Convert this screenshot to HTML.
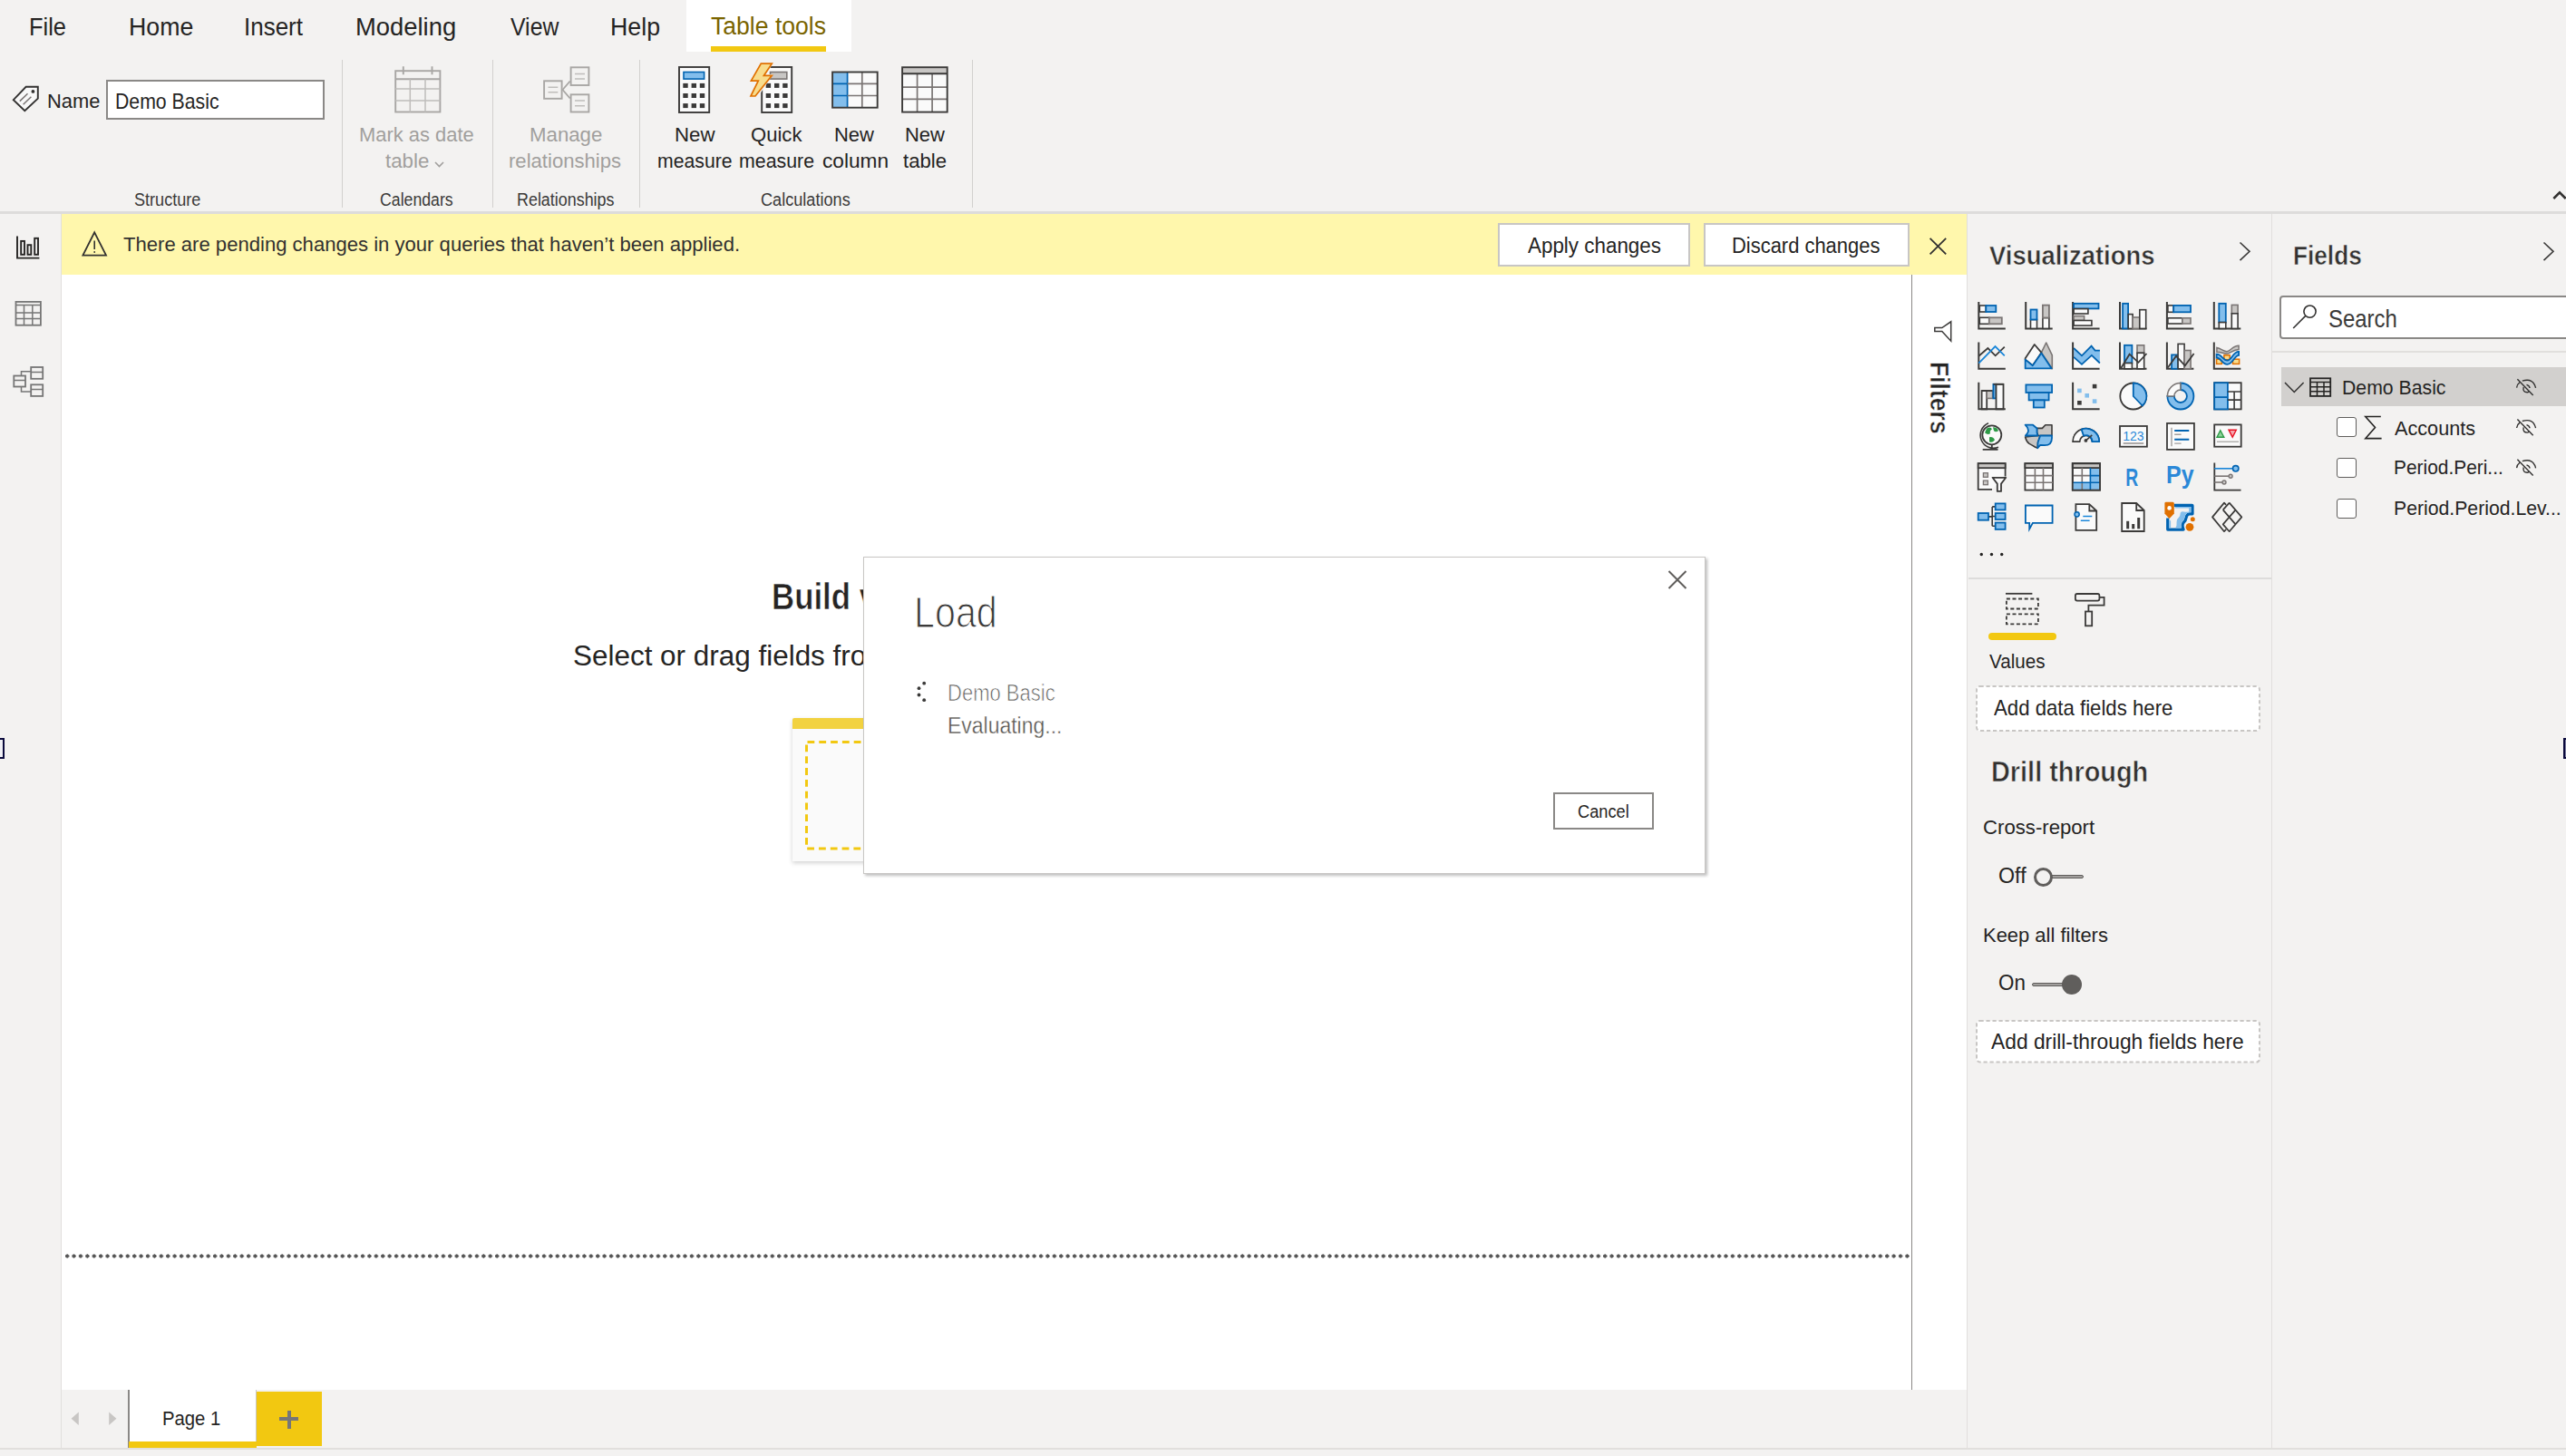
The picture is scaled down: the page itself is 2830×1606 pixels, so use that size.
<!DOCTYPE html>
<html><head><meta charset="utf-8">
<style>
*{box-sizing:border-box;margin:0;padding:0}
html,body{width:2830px;height:1606px;overflow:hidden;background:#F3F2F1;font-family:"Liberation Sans",sans-serif;color:#252423}
.a{position:absolute}
.t{position:absolute;white-space:nowrap;line-height:1;transform-origin:0 0}
svg{position:absolute;overflow:visible}
.ic{fill:none;stroke:#3B3A39;stroke-width:2}
</style></head><body>
<!-- tab row -->
<div class="a" style="left:757px;top:0;width:182px;height:57px;background:#fff"></div>
<div class="a" style="left:784px;top:51px;width:127px;height:6px;background:#F2C811"></div>
<!-- ribbon bottom border -->
<div class="a" style="left:0;top:233px;width:2830px;height:3px;background:#DDDCDB"></div>
<!-- ribbon separators -->
<div class="a" style="left:377px;top:66px;width:1px;height:163px;background:#D2D0CE"></div>
<div class="a" style="left:543px;top:66px;width:1px;height:163px;background:#D2D0CE"></div>
<div class="a" style="left:705px;top:66px;width:1px;height:163px;background:#D2D0CE"></div>
<div class="a" style="left:1072px;top:66px;width:1px;height:163px;background:#D2D0CE"></div>
<!-- name textbox -->
<div class="a" style="left:117px;top:88px;width:241px;height:44px;background:#fff;border:2px solid #8A8886"></div>
<!-- left sidebar border -->
<div class="a" style="left:67px;top:236px;width:1px;height:1362px;background:#E1DFDD"></div>
<!-- banner -->
<div class="a" style="left:68px;top:236px;width:2101px;height:67px;background:#FFF7AC"></div>
<div class="a" style="left:1652px;top:246px;width:212px;height:48px;background:#fff;border:2px solid #C8C6C4"></div>
<div class="a" style="left:1879px;top:246px;width:227px;height:48px;background:#fff;border:2px solid #C8C6C4"></div>
<!-- canvas -->
<div class="a" style="left:68px;top:303px;width:2101px;height:1230px;background:#fff"></div>
<div class="a" style="left:2108px;top:303px;width:1px;height:1230px;background:#8A8886"></div>
<!-- dotted line -->
<div class="a" style="left:72px;top:1383px;width:2036px;height:5px;background-image:radial-gradient(circle at 2.2px 2.5px,#555 1.9px,transparent 2.3px);background-size:7.42px 5px;background-repeat:repeat-x"></div>
<!-- placeholder card -->
<div class="a" style="left:874px;top:792px;width:200px;height:158px;background:#FAFAFA;border-radius:2px 2px 0 0;box-shadow:0 2px 5px rgba(0,0,0,0.18)"></div>
<div class="a" style="left:874px;top:792px;width:200px;height:12px;background:#F2D240;border-radius:2px 2px 0 0"></div>
<svg style="left:0;top:0" width="2830" height="1606"><rect x="889.5" y="818.5" width="170" height="117.5" fill="none" stroke="#F2C811" stroke-width="3" stroke-dasharray="7.8,5" stroke-dashoffset="-1"/></svg>
<!-- viz pane border -->
<div class="a" style="left:2169px;top:236px;width:1px;height:1362px;background:#E1DFDD"></div>
<div class="a" style="left:2505px;top:236px;width:1px;height:1362px;background:#E1DFDD"></div>
<!-- viz separator -->
<div class="a" style="left:2171px;top:637px;width:334px;height:1.5px;background:#DDDCDB"></div>
<!-- fields tab underline -->
<div class="a" style="left:2193px;top:698px;width:75px;height:8px;background:#F2C811;border-radius:4px"></div>
<!-- dashed wells -->
<svg style="left:0;top:0" width="2830" height="1606">
<rect x="2180" y="757" width="312" height="49" rx="3.5" fill="#fff" stroke="#C8C6C4" stroke-width="2" stroke-dasharray="4.2,2.8"/>
<rect x="2180" y="1126" width="312" height="45.5" rx="3.5" fill="#fff" stroke="#C8C6C4" stroke-width="2" stroke-dasharray="4.2,2.8"/>
</svg>

<!-- toggles -->
<div class="a" style="left:2260px;top:965px;width:38px;height:4px;background:#A19F9D;border:1px solid #605E5C;border-radius:2px"></div>
<div class="a" style="left:2243px;top:957px;width:21px;height:21px;background:#F3F2F1;border:3px solid #605E5C;border-radius:50%"></div>
<div class="a" style="left:2241px;top:1084px;width:40px;height:4px;background:#A19F9D;border:1px solid #605E5C;border-radius:2px"></div>
<div class="a" style="left:2274px;top:1075px;width:22px;height:22px;background:#605E5C;border-radius:50%"></div>
<!-- fields pane -->
<div class="a" style="left:2514px;top:326px;width:330px;height:48px;background:#fff;border:2px solid #8A8886;border-radius:4px"></div>
<div class="a" style="left:2506px;top:387px;width:324px;height:2px;background:#E1DFDD"></div>
<div class="a" style="left:2516px;top:405px;width:314px;height:43px;background:#D2D0CE"></div>
<div class="a" style="left:2577px;top:460px;width:22px;height:22px;background:#fff;border:1.5px solid #605E5C;border-radius:3px"></div>
<div class="a" style="left:2577px;top:505px;width:22px;height:22px;background:#fff;border:1.5px solid #605E5C;border-radius:3px"></div>
<div class="a" style="left:2577px;top:550px;width:22px;height:22px;background:#fff;border:1.5px solid #605E5C;border-radius:3px"></div>
<!-- page tabs -->
<div class="a" style="left:141px;top:1533px;width:142px;height:65px;background:#fff;border-left:2px solid #8A8886;border-right:1px solid #C8C6C4"></div>
<div class="a" style="left:142px;top:1590px;width:141px;height:7.5px;background:#F2C811"></div>
<div class="a" style="left:0;top:1597px;width:2830px;height:2px;background:#E1DFDD"></div>
<div class="a" style="left:283px;top:1535px;width:72px;height:60px;background:#F2C811"></div>
<div class="a" style="left:308px;top:1563px;width:21px;height:4px;background:#767676"></div>
<div class="a" style="left:316.5px;top:1556px;width:4px;height:20px;background:#767676"></div>
<svg style="left:0;top:0" width="2830" height="1606">
 <path d="M86.8,1557.4 L78.6,1564.7 L86.8,1572 Z" fill="#C8C6C4"/>
 <path d="M120.2,1557.4 L128.4,1564.7 L120.2,1572 Z" fill="#C8C6C4"/>
</svg>
<!-- edge markers -->
<div class="a" style="left:-3px;top:814px;width:8px;height:23px;background:#F0F0F5;border:2.5px solid #0A0A3C"></div>
<div class="a" style="left:2827px;top:814px;width:8px;height:23px;background:#8080A0;border:2.5px solid #0A0A3C"></div>
<svg style="left:0;top:0" width="2830" height="1606">
<!-- tag icon -->
<path d="M28.6,95.8 L41.8,95.8 L41.8,108.6 L27.3,122.3 L14.8,110.2 Z" fill="#F8F8F8" stroke="#323130" stroke-width="1.9" stroke-linejoin="miter"/>
<circle cx="36.4" cy="100.9" r="1.9" fill="#323130"/>
<path d="M21.8,111.6 L30.5,103.2 M25.6,115.2 L34.4,106.7" stroke="#7A7574" stroke-width="1.5"/>
<!-- calendar -->
<g stroke="#A8A6A4" fill="none">
<rect x="436.2" y="78.2" width="49.2" height="45.3" stroke-width="1.9" fill="#F3F2F1"/>
<path d="M436.2,87.2 H485.4" stroke-width="1.9"/>
<path d="M436.2,97.9 H485.4 M436.2,111 H485.4 M452.3,87.2 V123.5 M469,87.2 V123.5" stroke="#BFBDBB" stroke-width="1.5"/>
<path d="M444.8,73.2 V82.3 M476.5,73.2 V82.3" stroke-width="1.9"/>
</g>
<!-- relationships -->
<g stroke="#A8A6A4" fill="#F3F2F1" stroke-width="1.9">
<rect x="600.1" y="89.3" width="19.5" height="19.5"/>
<rect x="629.6" y="74.3" width="19.8" height="19.7"/>
<rect x="629.6" y="104.3" width="19.8" height="19.2"/>
<path d="M620.5,99 L628.7,89.5 M620.5,99 L628.7,108.5" fill="none"/>
<path d="M604.5,96.3 H615.3 M604.5,101.8 H615.3 M634,81.5 H645 M634,87 H645 M634,111 H645 M634,116.8 H645" stroke="#BFBDBB" stroke-width="1.5" fill="none"/>
</g>
<!-- new measure calculator -->
<rect x="749" y="74" width="33.2" height="50" fill="#FAFAFA" stroke="#3B3A39" stroke-width="1.9"/>
<rect x="754" y="79.5" width="22.6" height="7.6" fill="#83BEEC" stroke="#0063B1" stroke-width="1.6"/>
<g fill="#3B3A39">
<rect x="753.3" y="91.9" width="5.4" height="5"/><rect x="762.6" y="91.9" width="5.4" height="5"/><rect x="771.8" y="91.9" width="5.4" height="5"/>
<rect x="753.3" y="103" width="5.4" height="5"/><rect x="762.6" y="103" width="5.4" height="5"/><rect x="771.8" y="103" width="5.4" height="5"/>
<rect x="753.3" y="114.1" width="5.4" height="5"/><rect x="762.6" y="114.1" width="5.4" height="5"/><rect x="771.8" y="114.1" width="5.4" height="5"/>
</g>
<!-- quick measure -->
<rect x="840.2" y="74" width="33" height="50" fill="#FAFAFA" stroke="#3B3A39" stroke-width="1.9"/>
<rect x="849.5" y="79.5" width="18.3" height="7.6" fill="#C8C6C4" stroke="#7A7574" stroke-width="1.6"/>
<g fill="#3B3A39">
<rect x="844.7" y="91.9" width="5.4" height="5"/><rect x="854" y="91.9" width="5.4" height="5"/><rect x="863.2" y="91.9" width="5.4" height="5"/>
<rect x="844.7" y="103" width="5.4" height="5"/><rect x="854" y="103" width="5.4" height="5"/><rect x="863.2" y="103" width="5.4" height="5"/>
<rect x="844.7" y="114.1" width="5.4" height="5"/><rect x="854" y="114.1" width="5.4" height="5"/><rect x="863.2" y="114.1" width="5.4" height="5"/>
</g>
<path d="M838.4,68 L853.6,68 L845.2,82 L852.6,82 L835.2,108 L825.6,108 L833.8,91.2 L826,91.2 Z" fill="#F3F2F1"/>
<path d="M839.3,70.2 L851.3,70.2 L842.4,83.4 L851.3,83.4 L833,106 L828,106 L836.3,89.2 L828.4,89.2 Z" fill="#F8DC8C" stroke="#E07000" stroke-width="1.7" stroke-linejoin="miter"/>
<!-- new column -->
<rect x="918.1" y="79.5" width="49.6" height="39.2" fill="#FAFAFA"/>
<rect x="918.1" y="79.5" width="16.5" height="39.2" fill="#83BEEC"/>
<path d="M934.6,79.5 V118.7 M918.1,92.4 H934.6 M918.1,105.5 H934.6" stroke="#0063B1" stroke-width="1.7"/>
<path d="M950.8,79.5 V118.7 M934.6,92.4 H967.7 M934.6,105.5 H967.7" stroke="#7A7574" stroke-width="1.7"/>
<rect x="918.1" y="79.5" width="49.6" height="39.2" fill="none" stroke="#3B3A39" stroke-width="1.9"/>
<!-- new table -->
<rect x="995.1" y="74.2" width="49.6" height="49.4" fill="#FAFAFA"/>
<rect x="995.1" y="74.2" width="49.6" height="7.1" fill="#C8C6C4"/>
<path d="M995.1,96.2 H1044.7 M995.1,109.3 H1044.7 M1011.6,81.3 V123.6 M1028.1,81.3 V123.6" stroke="#7A7574" stroke-width="1.7"/>
<path d="M995.1,81.3 H1044.7" stroke="#3B3A39" stroke-width="1.9"/>
<rect x="995.1" y="74.2" width="49.6" height="49.4" fill="none" stroke="#3B3A39" stroke-width="1.9"/>
<!-- table chevron -->
<path d="M480,179 L484.5,183.5 L489,179" fill="none" stroke="#A19F9D" stroke-width="1.6"/>
<!-- collapse caret -->
<path d="M2816.3,219 L2823,212.3 L2829.7,219" fill="none" stroke="#323130" stroke-width="2.5"/>
<!-- sidebar report icon -->
<g fill="none" stroke="#252423" stroke-width="1.9">
<path d="M19,260.5 V284.6 H43.4"/>
<rect x="23.2" y="265.9" width="3.8" height="14.9"/>
<rect x="30.5" y="270.2" width="3.8" height="10.6"/>
<rect x="38.2" y="262.8" width="3.8" height="18"/>
</g>
<!-- sidebar table icon -->
<g fill="none" stroke="#767676" stroke-width="1.8">
<rect x="17.5" y="332.9" width="27.4" height="25.8"/>
<path d="M17.5,336.5 H44.9 M17.5,345 H44.9 M17.5,351.5 H44.9 M26.5,336.5 V358.7 M35.8,336.5 V358.7" stroke-width="1.5"/>
</g>
<!-- sidebar model icon -->
<g fill="none" stroke="#767676" stroke-width="1.8">
<rect x="15.3" y="414.5" width="12.7" height="12"/>
<rect x="34.2" y="405" width="13" height="12.8"/>
<rect x="34.2" y="424.3" width="13" height="12.6"/>
<path d="M15.3,419.6 H28 M34.2,410.5 H47.2 M34.2,429.5 H47.2 M23.5,414.5 V409.8 H34.2 M23.5,426.5 V432 H34.2" stroke-width="1.5"/>
</g>
<!-- warning triangle -->
<path d="M104.2,256.3 L117,281.6 L91.4,281.6 Z" fill="none" stroke="#323130" stroke-width="1.8" stroke-linejoin="miter"/>
<path d="M104.2,265.5 V275" stroke="#323130" stroke-width="1.6"/>
<circle cx="104.2" cy="278" r="0.9" fill="#323130"/>
<!-- banner close -->
<path d="M2128.6,262.8 L2146.2,280.4 M2146.2,262.8 L2128.6,280.4" stroke="#323130" stroke-width="1.8"/>
<!-- filters funnel (rotated, pointing left) -->
<path d="M2151.7,354.8 L2151.7,376.2 L2141.8,365.6 L2133.8,365.6 L2133.8,361.6 L2141.8,361.6 Z" fill="none" stroke="#3B3A39" stroke-width="1.5" stroke-linejoin="miter"/>
<path d="M2151.7,354.8 L2141.8,363.4" fill="none" stroke="#3B3A39" stroke-width="0"/>
<!-- pane chevrons -->
<path d="M2470.5,267.5 L2481,277.3 L2470.5,287.2" fill="none" stroke="#3B3A39" stroke-width="1.6"/>
<path d="M2805.5,267.5 L2816,277.3 L2805.5,287.2" fill="none" stroke="#3B3A39" stroke-width="1.6"/>
<!-- search magnifier -->
<circle cx="2547.5" cy="343.6" r="6.6" fill="none" stroke="#323130" stroke-width="1.6"/>
<path d="M2542.8,348.4 L2529.2,362" stroke="#323130" stroke-width="1.6"/>
<!-- fields: chevron down -->
<path d="M2520,422 L2530.3,432.5 L2540.6,422" fill="none" stroke="#323130" stroke-width="1.5"/>
<!-- fields table icon -->
<g fill="none" stroke="#252423">
<rect x="2548" y="417.3" width="22.2" height="19.6" stroke-width="1.8"/>
<path d="M2548,421.5 H2570.2 M2548,426.8 H2570.2 M2548,431.8 H2570.2 M2555.5,421.5 V436.9 M2563,421.5 V436.9" stroke-width="1.5"/>
</g>
<!-- sigma -->
<path d="M2625.8,459.5 H2608.8 L2619.5,471.5 L2608.8,483.6 H2626.6" fill="none" stroke="#252423" stroke-width="1.6"/>
</svg>
<svg style="left:0;top:0" width="2830" height="1606">
<g transform="translate(2181.0,332.0)"><path d="M1.3,1 V30.4 H30.8" fill="none" stroke="#3B3A39" stroke-width="2"/>
<rect x="2.3" y="5" width="7" height="7" fill="#FAFAFA" stroke="#3B3A39" stroke-width="1.6"/>
<rect x="9.3" y="5" width="11" height="7" fill="#83BEEC" stroke="#0063B1" stroke-width="1.8"/>
<rect x="2.3" y="18.3" width="10.5" height="7" fill="#FAFAFA" stroke="#3B3A39" stroke-width="1.6"/>
<rect x="12.8" y="18.3" width="14" height="7" fill="#C8C6C4" stroke="#7A7574" stroke-width="1.8"/></g>
<g transform="translate(2232.9,332.0)"><path d="M1.3,1 V30.4 H30.8" fill="none" stroke="#3B3A39" stroke-width="2"/>
<rect x="6.6" y="20.5" width="7" height="9.9" fill="#FAFAFA" stroke="#3B3A39" stroke-width="1.6"/>
<rect x="6.6" y="9.5" width="7" height="11" fill="#83BEEC" stroke="#0063B1" stroke-width="1.8"/>
<rect x="20" y="18.5" width="7" height="11.9" fill="#FAFAFA" stroke="#3B3A39" stroke-width="1.6"/>
<rect x="20" y="4.6" width="7" height="13.9" fill="#C8C6C4" stroke="#7A7574" stroke-width="1.8"/></g>
<g transform="translate(2284.8,332.0)"><path d="M1.3,1 V30.4 H30.8" fill="none" stroke="#3B3A39" stroke-width="2"/>
<rect x="2.3" y="2.8" width="27.4" height="5.6" fill="#83BEEC" stroke="#0063B1" stroke-width="1.8"/>
<rect x="2.3" y="8.6" width="15.8" height="5.4" fill="#FAFAFA" stroke="#3B3A39" stroke-width="1.6"/>
<rect x="2.3" y="16.6" width="11.5" height="4.8" fill="#C8C6C4" stroke="#7A7574" stroke-width="1.6"/>
<rect x="2.3" y="21.5" width="19.8" height="5.6" fill="#FAFAFA" stroke="#3B3A39" stroke-width="1.6"/></g>
<g transform="translate(2336.7,332.0)"><path d="M1.3,1 V30.4 H30.8" fill="none" stroke="#3B3A39" stroke-width="2"/>
<rect x="4.4" y="2.8" width="6" height="27.6" fill="#83BEEC" stroke="#0063B1" stroke-width="1.8"/>
<rect x="10.5" y="14.6" width="4.9" height="15.8" fill="#FAFAFA" stroke="#3B3A39" stroke-width="1.6"/>
<rect x="15.4" y="18" width="7.6" height="12.4" fill="#C8C6C4" stroke="#7A7574" stroke-width="1.6"/>
<rect x="23.1" y="9.7" width="6.9" height="20.7" fill="#FAFAFA" stroke="#3B3A39" stroke-width="1.6"/></g>
<g transform="translate(2388.6,332.0)"><path d="M1.3,1 V30.4 H30.8" fill="none" stroke="#3B3A39" stroke-width="2"/>
<rect x="2.3" y="4.9" width="6.3" height="7.4" fill="#FAFAFA" stroke="#3B3A39" stroke-width="1.6"/>
<rect x="8.6" y="4.9" width="18.8" height="7.4" fill="#83BEEC" stroke="#0063B1" stroke-width="1.8"/>
<rect x="2.3" y="18.8" width="16" height="6.2" fill="#FAFAFA" stroke="#3B3A39" stroke-width="1.6"/>
<rect x="18.3" y="18.8" width="9.1" height="6.2" fill="#C8C6C4" stroke="#7A7574" stroke-width="1.6"/></g>
<g transform="translate(2440.5,332.0)"><path d="M1.3,1 V30.4 H30.8" fill="none" stroke="#3B3A39" stroke-width="2"/>
<rect x="6.8" y="2.8" width="7.5" height="20.8" fill="#83BEEC" stroke="#0063B1" stroke-width="1.8"/>
<rect x="6.8" y="23.6" width="7.5" height="6.8" fill="#FAFAFA" stroke="#3B3A39" stroke-width="1.6"/>
<rect x="20.8" y="4.4" width="6.8" height="9.4" fill="#C8C6C4" stroke="#7A7574" stroke-width="1.6"/>
<rect x="20.8" y="13.8" width="6.8" height="16.6" fill="#FAFAFA" stroke="#3B3A39" stroke-width="1.6"/></g>
<g transform="translate(2181.0,376.4)"><path d="M1.3,1 V30.4 H30.8" fill="none" stroke="#3B3A39" stroke-width="2"/>
<path d="M1.3,16.3 L11.4,7.6 L19.7,15.9 L29.8,6.3" fill="none" stroke="#3B3A39" stroke-width="1.8"/>
<path d="M1.3,24.2 L19.5,5.7 L29.8,15.9" fill="none" stroke="#1A86D9" stroke-width="1.8"/></g>
<g transform="translate(2232.9,376.4)">
<path d="M18.5,12.5 L23.8,1.6 L30.4,15.5 L30.4,30.4 Z" fill="#C8C6C4" stroke="#7A7574" stroke-width="1.6" stroke-linejoin="round"/>
<path d="M0.75,18.8 L10.9,3.6 L18.5,12.5 L8.9,26.8 L0.75,20.2 Z" fill="#FAFAFA" stroke="#3B3A39" stroke-width="1.8" stroke-linejoin="round"/>
<path d="M0.75,20.2 L8.9,26.8 L18.5,13.2 L29.8,30 L0.75,30 Z" fill="#83BEEC" stroke="#0063B1" stroke-width="1.8" stroke-linejoin="round"/></g>
<g transform="translate(2284.8,376.4)">
<path d="M2.3,17.5 L11.2,25.5 L22.1,15.5 L31.1,24.1 L31.1,30.4 L1.3,30.4 Z" fill="#FAFAFA"/>
<path d="M2.3,7.6 L11.2,15.9 L21.8,5.3 L25.8,10.2 L31.1,10.2 L31.1,24.1 L22.1,15.5 L11.2,25.5 L2.3,17.5 Z" fill="#83BEEC"/>
<path d="M2.3,7.6 L11.2,15.9 L21.8,5.3 L25.8,10.2 L31.1,10.2 M2.3,17.5 L11.2,25.5 L22.1,15.5 L31.1,24.1" fill="none" stroke="#0063B1" stroke-width="1.8"/><path d="M1.3,1 V30.4 H30.8" fill="none" stroke="#3B3A39" stroke-width="2"/></g>
<g transform="translate(2336.7,376.4)"><path d="M1.3,1 V30.4 H30.8" fill="none" stroke="#3B3A39" stroke-width="2"/>
<rect x="6.3" y="4.4" width="8.4" height="19.7" fill="#83BEEC" stroke="#0063B1" stroke-width="1.8"/>
<rect x="6.3" y="24.1" width="8.4" height="6.3" fill="#FAFAFA" stroke="#3B3A39" stroke-width="1.6"/>
<rect x="20.3" y="4.4" width="7.7" height="8.5" fill="#C8C6C4" stroke="#7A7574" stroke-width="1.6"/>
<rect x="20.3" y="12.9" width="7.7" height="17.5" fill="#FAFAFA" stroke="#3B3A39" stroke-width="1.6"/>
<path d="M2.1,30.4 L11.9,14.3 L21.7,23.4 L30.8,13.6" fill="none" stroke="#3B3A39" stroke-width="1.8"/></g>
<g transform="translate(2388.6,376.4)"><path d="M1.3,1 V30.4 H30.8" fill="none" stroke="#3B3A39" stroke-width="2"/>
<rect x="6.5" y="15" width="7" height="15.4" fill="#83BEEC" stroke="#0063B1" stroke-width="1.8"/>
<rect x="13.5" y="3" width="7" height="27.4" fill="#FAFAFA" stroke="#3B3A39" stroke-width="1.6"/>
<rect x="20.5" y="10.1" width="7" height="20.3" fill="#C8C6C4" stroke="#7A7574" stroke-width="1.6"/>
<path d="M2.3,29 L11.4,16.3 L21.2,26.9 L31,13.6" fill="none" stroke="#3B3A39" stroke-width="1.8"/></g>
<g transform="translate(2440.5,376.4)"><path d="M1.3,1 V30.4 H30.8" fill="none" stroke="#3B3A39" stroke-width="2"/>
<rect x="4.1" y="19.8" width="5.8" height="5.2" fill="#F8DC8C" stroke="#E07000" stroke-width="1.5"/>
<rect x="12.4" y="15.4" width="6.3" height="4.9" fill="#F8DC8C" stroke="#E07000" stroke-width="1.5"/>
<rect x="22" y="19.8" width="7.1" height="5.2" fill="#F8DC8C" stroke="#E07000" stroke-width="1.5"/>
<path d="M4.4,7.1 C9,8 12,11.3 15.4,11.3 C19,11.3 22,4.9 28.6,4.9 L28.6,9.1 C22,9.1 19,13.7 15.4,13.7 C12,13.7 9,11.8 4.4,11.8 Z" fill="#C8C6C4" stroke="#7A7574" stroke-width="1.5"/>
<path d="M4.1,14.3 C10,14.3 11,21.2 15.9,21.2 C21,21.2 22,11.5 28.6,11.5 L28.6,15.4 C24,15.4 22,25.5 15.9,25.5 C10,25.5 9,18.1 4.1,18.1 Z" fill="#83BEEC" stroke="#0063B1" stroke-width="1.8"/></g>
<g transform="translate(2181.0,420.8)">
<rect x="4.6" y="10.2" width="5.6" height="20.4" fill="#FAFAFA" stroke="#3B3A39" stroke-width="1.8"/>
<rect x="10.2" y="10.2" width="6.4" height="8.4" fill="#C8C6C4" stroke="#7A7574" stroke-width="1.6"/>
<path d="M4.6,10.2 H16.6" stroke="#3B3A39" stroke-width="1.8"/>
<rect x="17.4" y="3" width="3.1" height="15.6" fill="#83BEEC" stroke="#0063B1" stroke-width="1.8"/>
<rect x="20.5" y="3" width="8" height="27.6" fill="#FAFAFA" stroke="#3B3A39" stroke-width="1.8"/>
<path d="M17.4,3 H28.5" stroke="#3B3A39" stroke-width="1.8"/><path d="M1.3,1 V30.4 H30.8" fill="none" stroke="#3B3A39" stroke-width="2"/></g>
<g transform="translate(2232.9,420.8)">
<rect x="1.5" y="3.6" width="28.7" height="8.6" fill="#83BEEC" stroke="#0063B1" stroke-width="1.8"/>
<rect x="4.7" y="12.2" width="22" height="8.4" fill="#83BEEC" stroke="#0063B1" stroke-width="1.8"/>
<rect x="9.9" y="20.6" width="12" height="8.1" fill="#83BEEC" stroke="#0063B1" stroke-width="1.8"/></g>
<g transform="translate(2284.8,420.8)"><path d="M1.3,1 V30.4 H30.8" fill="none" stroke="#3B3A39" stroke-width="2"/>
<rect x="23" y="3" width="4.6" height="4.6" fill="#3B3A39"/>
<rect x="6.3" y="21.2" width="4.6" height="4.6" fill="#3B3A39"/>
<rect x="6.3" y="7.8" width="4.6" height="4.6" fill="#83BEEC"/>
<rect x="14.6" y="13.2" width="4.6" height="4.6" fill="#83BEEC"/>
<rect x="23" y="19.5" width="4.6" height="4.6" fill="#83BEEC"/></g>
<g transform="translate(2336.7,420.8)">
<circle cx="16.1" cy="16.2" r="14.5" fill="#FAFAFA" stroke="#3B3A39" stroke-width="1.8"/>
<path d="M16.1,16.2 L16.1,1.7 A14.5,14.5 0 0 1 26.1,26.7 Z" fill="#83BEEC" stroke="#0063B1" stroke-width="1.8" stroke-linejoin="round"/></g>
<g transform="translate(2388.6,420.8)">
<path d="M16.3,1.7 A14.5,14.5 0 1 1 1.8,16.2 L9.3,16.2 A7,7 0 1 0 16.3,9.2 Z" fill="#83BEEC" stroke="#0063B1" stroke-width="1.8"/>
<path d="M1.8,16.2 A14.5,14.5 0 0 1 16.3,1.7 L16.3,9.2 A7,7 0 0 0 9.3,16.2 Z" fill="#FAFAFA" stroke="#7A7574" stroke-width="1.6"/></g>
<g transform="translate(2440.5,420.8)">
<rect x="1.7" y="1.4" width="29.5" height="29.2" fill="#FAFAFA" stroke="#3B3A39" stroke-width="1.8"/>
<rect x="1.7" y="1.4" width="14.7" height="29.2" fill="#83BEEC" stroke="#0063B1" stroke-width="1.8"/>
<path d="M1.7,17.3 H16.4" stroke="#0063B1" stroke-width="1.8"/>
<path d="M16.4,11.2 H31.2 M16.4,20.3 H31.2 M23.6,11.2 V30.6" stroke="#3B3A39" stroke-width="1.6"/></g>
<g transform="translate(2181.0,465.2)">
<path d="M12,1.5 A14,14 0 0 0 23,28" fill="none" stroke="#3B3A39" stroke-width="1.6"/>
<circle cx="15.8" cy="14.6" r="10.5" fill="#FAFAFA" stroke="#3B3A39" stroke-width="1.8"/>
<path d="M10,7.5 Q14,5 16,8 Q13,10 14,13 Q11,15 8,12 Z M17,6 Q22,6 23,10 Q20,12 18,10 Z M13,17 Q17,16 19,20 Q16,24 13,22 Z" fill="#2D9A47"/>
<path d="M5.7,30.7 H22.5 M15.8,25.2 V30.7" stroke="#3B3A39" stroke-width="1.8"/></g>
<g transform="translate(2232.9,465.2)">
<path d="M0.7,16.8 L15.1,15.3 L17.3,15.3 L14.7,22.7 L14.4,29 Q11,28 9.2,26.4 L5.1,24.2 Q2,22 0.7,16.8 Z" fill="#C8C6C4" stroke="#3B3A39" stroke-width="1.6" stroke-linejoin="round"/>
<path d="M13.6,7.2 L19.5,7.2 L22.9,3.5 L30.1,3.5 L30.1,15.3 L17.3,15.3 L15.1,15.3 L13.6,12 Z" fill="#C8C6C4" stroke="#3B3A39" stroke-width="1.6" stroke-linejoin="round"/>
<path d="M0.7,3.5 L9.2,3.5 L13.6,7.3 L13.6,12 L14.6,15.3 L1,15.3 Q4.5,12 4,9.2 Q3.5,6 0.7,3.5 Z" fill="#83BEEC" stroke="#0063B1" stroke-width="1.8" stroke-linejoin="round"/>
<path d="M17.3,15.3 L30.1,15.3 L30.1,18 Q30,26 22.1,26 L17.3,25.7 L14.4,29 L14.7,22.7 Z" fill="#83BEEC" stroke="#0063B1" stroke-width="1.8" stroke-linejoin="round"/></g>
<g transform="translate(2284.8,465.2)">
<path d="M1.2,22 A14.6,14.6 0 0 1 30.4,22 L22.7,22 A6.9,6.9 0 0 0 8.9,22 Z" fill="#FAFAFA" stroke="#3B3A39" stroke-width="1.7" stroke-linejoin="round"/>
<path d="M10.8,8.4 A14.6,14.6 0 0 1 30.4,22 L22.7,22 A6.9,6.9 0 0 0 13.2,15.5 Z" fill="#83BEEC" stroke="#0063B1" stroke-width="1.8" stroke-linejoin="round"/>
<path d="M15.4,20.9 L22.5,14.6" stroke="#3B3A39" stroke-width="1.6"/>
<circle cx="15.6" cy="20.7" r="1.9" fill="#3B3A39"/></g>
<g transform="translate(2336.7,465.2)">
<rect x="1.3" y="4.8" width="29.9" height="22.7" fill="#FAFAFA" stroke="#3B3A39" stroke-width="1.8"/>
<text x="16.2" y="21" font-family="Liberation Sans" font-size="14" fill="#2B88D8" text-anchor="middle">123</text>
<path d="M5,23.8 H27.5" stroke="#7A7574" stroke-width="1.2"/></g>
<g transform="translate(2388.6,465.2)">
<rect x="1.4" y="1.7" width="29.9" height="29" fill="#FAFAFA" stroke="#3B3A39" stroke-width="1.8"/>
<path d="M6.4,6.5 V27" stroke="#A19F9D" stroke-width="1.4"/>
<path d="M9.6,9.8 H25.7 M9.6,19.6 H25.7" stroke="#0063B1" stroke-width="2"/>
<path d="M9.6,14.1 H17 M9.6,23.9 H17" stroke="#A19F9D" stroke-width="1.4"/></g>
<g transform="translate(2440.5,465.2)">
<rect x="1.7" y="3.2" width="29.5" height="24.3" fill="#FAFAFA" stroke="#3B3A39" stroke-width="1.8"/>
<path d="M4.5,17 L8.3,9.5 L12.3,17 Z" fill="#8DD39A" stroke="#2D9A47" stroke-width="1.4"/>
<path d="M17.5,9 L25.8,9 L21.7,17 Z" fill="#F6A6AE" stroke="#E81123" stroke-width="1.4"/>
<path d="M4.5,22 H28.5" stroke="#A19F9D" stroke-width="1.2"/></g>
<g transform="translate(2181.0,509.6)">
<path d="M16,30.2 H0.7 V1.6 H30.6 V16" fill="#FAFAFA" stroke="#3B3A39" stroke-width="1.8"/>
<rect x="0.7" y="1.6" width="29.9" height="5" fill="#C8C6C4" stroke="#3B3A39" stroke-width="1.8"/>
<rect x="6.4" y="12.1" width="5" height="4.6" fill="#C8C6C4" stroke="#7A7574" stroke-width="1.3"/>
<rect x="6.4" y="20.5" width="5" height="4.6" fill="#C8C6C4" stroke="#7A7574" stroke-width="1.3"/>
<path d="M16.5,17.2 H31.3 L26,24 V32.3 H21.8 V24 Z" fill="#FAFAFA" stroke="#3B3A39" stroke-width="1.8" stroke-linejoin="round"/></g>
<g transform="translate(2232.9,509.6)">
<rect x="0.5" y="1.6" width="30.6" height="29.4" fill="#FAFAFA" stroke="#3B3A39" stroke-width="1.8"/>
<rect x="0.5" y="1.6" width="30.6" height="4.9" fill="#C8C6C4" stroke="#3B3A39" stroke-width="1.8"/>
<path d="M11.5,6.5 V31 M20.6,6.5 V31 M0.5,15 H31.1 M0.5,22.7 H31.1" stroke="#7A7574" stroke-width="1.6"/></g>
<g transform="translate(2284.8,509.6)">
<rect x="1" y="1.6" width="30.2" height="29.4" fill="#FAFAFA" stroke="#3B3A39" stroke-width="1.8"/>
<rect x="20.6" y="6.5" width="10.6" height="24.5" fill="#83BEEC"/>
<rect x="1" y="22.7" width="30.2" height="8.3" fill="#83BEEC"/>
<rect x="1" y="1.6" width="30.2" height="4.9" fill="#C8C6C4" stroke="#3B3A39" stroke-width="1.8"/>
<path d="M11.5,6.5 V31 M0.5,15 H20.6" stroke="#7A7574" stroke-width="1.6"/>
<path d="M20.6,6.5 V31 M20.6,15 H31.2 M1,22.7 H31.2" stroke="#0063B1" stroke-width="1.6"/>
<rect x="1" y="1.6" width="30.2" height="29.4" fill="none" stroke="#3B3A39" stroke-width="1.8"/></g>
<g transform="translate(2336.7,509.6)"><text x="7.6" y="26.2" font-family="Liberation Sans" font-weight="bold" font-size="28" fill="#2B88D8" textLength="14" lengthAdjust="spacingAndGlyphs">R</text></g>
<g transform="translate(2388.6,509.6)"><text x="0.5" y="23.5" font-family="Liberation Sans" font-weight="bold" font-size="28" fill="#2B88D8" textLength="30.5" lengthAdjust="spacingAndGlyphs">Py</text></g>
<g transform="translate(2440.5,509.6)">
<path d="M1.8,1 V31 H31" fill="none" stroke="#3B3A39" stroke-width="1.8"/>
<path d="M1.8,7.2 H22" stroke="#1A86D9" stroke-width="1.6"/>
<circle cx="25.2" cy="7.2" r="3.2" fill="#83BEEC" stroke="#0063B1" stroke-width="1.6"/>
<path d="M1.8,15.6 H17.6" stroke="#7A7574" stroke-width="1.6"/>
<circle cx="19.6" cy="15.6" r="2" fill="#C8C6C4" stroke="#7A7574" stroke-width="1.4"/>
<path d="M1.8,22.4 H10.5" stroke="#7A7574" stroke-width="1.6"/>
<circle cx="12.5" cy="22.4" r="2" fill="#C8C6C4" stroke="#7A7574" stroke-width="1.4"/></g>
<g transform="translate(2181.0,554.0)">
<path d="M12,15.9 H16.2 M16.2,4.9 V26.2 M16.2,4.9 H19.7 M16.2,15.5 H19.7 M16.2,26.2 H19.7" fill="none" stroke="#3B3A39" stroke-width="1.6"/>
<rect x="0.7" y="12" width="11.3" height="7.7" fill="#83BEEC" stroke="#0063B1" stroke-width="1.8"/>
<rect x="19.7" y="1.4" width="10.9" height="7" fill="#83BEEC" stroke="#0063B1" stroke-width="1.8"/>
<rect x="19.7" y="12" width="10.9" height="7" fill="#83BEEC" stroke="#0063B1" stroke-width="1.8"/>
<rect x="19.7" y="22.5" width="10.9" height="7.4" fill="#83BEEC" stroke="#0063B1" stroke-width="1.8"/></g>
<g transform="translate(2232.9,554.0)">
<path d="M1,3.5 H30.7 V22.9 H9 L5.3,29.5 V22.9 H1 Z" fill="#FAFAFA" stroke="#0063B1" stroke-width="1.8" stroke-linejoin="miter"/></g>
<g transform="translate(2284.8,554.0)">
<path d="M4.6,2.2 H19.5 L27.4,9.5 V30.8 H4.6 Z M19.5,2.2 V9.5 H27.4" fill="#FAFAFA" stroke="#3B3A39" stroke-width="1.8"/>
<circle cx="5.8" cy="13.3" r="2.6" fill="#83BEEC" stroke="#0063B1" stroke-width="1.5"/>
<path d="M12.5,15.4 H22.5 M10,20.3 H19.8" stroke="#1A86D9" stroke-width="1.5"/></g>
<g transform="translate(2336.7,554.0)">
<path d="M3.5,1 H19.5 L28,9 V32 H3.5 Z M19.5,1 V9 H28" fill="#FAFAFA" stroke="#3B3A39" stroke-width="1.8"/>
<rect x="8.5" y="20.8" width="3" height="8.5" fill="#3B3A39"/>
<rect x="14.5" y="24" width="3" height="5.3" fill="#3B3A39"/>
<rect x="20.5" y="17" width="3" height="12.3" fill="#3B3A39"/></g>
<g transform="translate(2388.6,554.0)">
<path d="M9.2,3.3 L28.9,3.3 Q29.4,3.3 29.4,3.8 L29.4,12.8 L26,12.8 Q23,13.3 22.5,17 Q22,20.5 19.5,22.5 Q17.5,25 19.5,30.1 L2.1,30.1 L2.1,17.5" fill="none" stroke="#0063B1" stroke-width="3.2" stroke-linejoin="round"/>
<path d="M10,4.9 H27.8 V11.2 H26 Q21.5,11.8 20.9,16.5 Q20.3,20 18,21.5 Q15.5,24.5 17.3,28.5 H3.7 V19.2 L5.5,20.5 V28.5 H10.5 Q12.5,26 12,21.5 Q11.8,18.5 14.2,17 Q16,15.5 16.2,11.5 Q17.5,9.2 21.5,10.8 L25.5,10.5 V6.5 H10 Z" fill="#83BEEC"/>
<path d="M-1.2,1 Q-1.2,-0.3 0.2,-0.3 H7.8 Q9.2,-0.3 9.2,1.3 V12.5 L4,17.9 L-1.2,12.5 Z" fill="#E07000"/>
<circle cx="4" cy="6.4" r="2.3" fill="#FFFFFF"/>
<circle cx="29.7" cy="18.8" r="2.5" fill="#E07000"/>
<circle cx="26.4" cy="27.3" r="4.4" fill="#E07000"/></g>
<g transform="translate(2440.5,554.0)">
<path d="M14.6,2.9 L12.5,0.6 L-0.5,16.4 L12.5,32.2 L14.6,29.9" fill="none" stroke="#3B3A39" stroke-width="1.7" stroke-linejoin="round"/>
<path d="M18.2,0.6 L31.8,16.4 L18.2,32.2 L11.2,24.4 L25.1,8.4 M11.2,8.4 L25.1,24.4 M11.2,8.4 L18.2,0.6" fill="none" stroke="#3B3A39" stroke-width="1.7" stroke-linejoin="round"/></g>
<circle cx="2185.3" cy="611.5" r="1.7" fill="#252423"/><circle cx="2196.5" cy="611.5" r="1.7" fill="#252423"/><circle cx="2207.7" cy="611.5" r="1.7" fill="#252423"/>
<path d="M2212,654.8 H2241.4" stroke="#3B3A39" stroke-width="1.8"/>
<rect x="2212.9" y="660.5" width="35" height="11" fill="none" stroke="#3B3A39" stroke-width="1.8" stroke-dasharray="4,2.6"/>
<rect x="2212.9" y="677.3" width="35" height="11" fill="none" stroke="#3B3A39" stroke-width="1.8" stroke-dasharray="4,2.6"/>
<rect x="2288.9" y="655" width="26.5" height="7.6" rx="2" fill="none" stroke="#3B3A39" stroke-width="1.8"/>
<path d="M2315.4,658.8 H2320.6 V667.6 H2303.4 V674" fill="none" stroke="#3B3A39" stroke-width="1.8"/>
<rect x="2300" y="674.5" width="7.2" height="15.8" fill="none" stroke="#3B3A39" stroke-width="1.8"/>
<g transform="translate(0,0)" fill="none" stroke="#323130" stroke-width="1.4"><path d="M2776.4,418.3 L2793.7,436"/><path d="M2781.8,420.2 Q2794,416.5 2796.6,427.9"/><path d="M2779,421.8 Q2776,424 2775.6,427.7"/><path d="M2786.5,424.3 Q2790,425.5 2790,428"/><path d="M2783.2,427 Q2782,433 2787.5,432.8 Q2788.8,432.6 2789.3,431.5"/></g>
<g transform="translate(0,44.3)" fill="none" stroke="#323130" stroke-width="1.4"><path d="M2776.4,418.3 L2793.7,436"/><path d="M2781.8,420.2 Q2794,416.5 2796.6,427.9"/><path d="M2779,421.8 Q2776,424 2775.6,427.7"/><path d="M2786.5,424.3 Q2790,425.5 2790,428"/><path d="M2783.2,427 Q2782,433 2787.5,432.8 Q2788.8,432.6 2789.3,431.5"/></g>
<g transform="translate(0,88.5)" fill="none" stroke="#323130" stroke-width="1.4"><path d="M2776.4,418.3 L2793.7,436"/><path d="M2781.8,420.2 Q2794,416.5 2796.6,427.9"/><path d="M2779,421.8 Q2776,424 2775.6,427.7"/><path d="M2786.5,424.3 Q2790,425.5 2790,428"/><path d="M2783.2,427 Q2782,433 2787.5,432.8 Q2788.8,432.6 2789.3,431.5"/></g>
</svg>
<div class="t" id="file" style="left:32.13px;top:15.65px;font-size:27.17px;font-weight:400;color:#252423;transform:scaleX(0.9347);">File</div>
<div class="t" id="home" style="left:141.78px;top:15.65px;font-size:27.17px;font-weight:400;color:#252423;transform:scaleX(0.9843);">Home</div>
<div class="t" id="insert" style="left:268.84px;top:15.65px;font-size:27.17px;font-weight:400;color:#252423;transform:scaleX(0.9567);">Insert</div>
<div class="t" id="modeling" style="left:392.48px;top:15.65px;font-size:27.17px;font-weight:400;color:#252423;transform:scaleX(1.0084);">Modeling</div>
<div class="t" id="view" style="left:562.50px;top:15.65px;font-size:27.17px;font-weight:400;color:#252423;transform:scaleX(0.9148);">View</div>
<div class="t" id="help" style="left:673.03px;top:15.65px;font-size:27.17px;font-weight:400;color:#252423;transform:scaleX(0.9858);">Help</div>
<div class="t" id="tabletools" style="left:784.10px;top:15.71px;font-size:26.81px;font-weight:400;color:#7A6400;transform:scaleX(0.9917);">Table tools</div>
<div class="t" id="name" style="left:51.54px;top:100.10px;font-size:22.83px;font-weight:400;color:#252423;transform:scaleX(0.9592);">Name</div>
<div class="t" id="demobasic_tb" style="left:126.58px;top:101.29px;font-size:23.19px;font-weight:400;color:#252423;transform:scaleX(0.9163);">Demo Basic</div>
<div class="t" id="structure" style="left:148.00px;top:210.56px;font-size:19.93px;font-weight:400;color:#3B3A39;transform:scaleX(0.9078);">Structure</div>
<div class="t" id="markas" style="left:396.49px;top:137.77px;font-size:21.74px;font-weight:400;color:#A19F9D;transform:scaleX(1.0083);">Mark as date</div>
<div class="t" id="table1" style="left:425.00px;top:166.56px;font-size:21.70px;font-weight:400;color:#A19F9D;transform:scaleX(1.0273);">table</div>
<div class="t" id="calendars" style="left:419.10px;top:210.84px;font-size:19.60px;font-weight:400;color:#3B3A39;transform:scaleX(0.9038);">Calendars</div>
<div class="t" id="manage" style="left:583.97px;top:137.81px;font-size:21.70px;font-weight:400;color:#A19F9D;transform:scaleX(1.0251);">Manage</div>
<div class="t" id="relationships" style="left:561.48px;top:166.56px;font-size:21.70px;font-weight:400;color:#A19F9D;transform:scaleX(1.0193);">relationships</div>
<div class="t" id="relationshipsL" style="left:569.84px;top:210.84px;font-size:19.60px;font-weight:400;color:#3B3A39;transform:scaleX(0.9137);">Relationships</div>
<div class="t" id="new1" style="left:743.98px;top:137.77px;font-size:21.74px;font-weight:400;color:#252423;transform:scaleX(1.0231);">New</div>
<div class="t" id="measure1" style="left:725.02px;top:166.56px;font-size:21.70px;font-weight:400;color:#252423;transform:scaleX(0.9782);">measure</div>
<div class="t" id="quick" style="left:828.48px;top:137.77px;font-size:21.74px;font-weight:400;color:#252423;transform:scaleX(1.0154);">Quick</div>
<div class="t" id="measure2" style="left:815.27px;top:166.56px;font-size:21.70px;font-weight:400;color:#252423;transform:scaleX(0.9842);">measure</div>
<div class="t" id="new2" style="left:920.24px;top:137.77px;font-size:21.74px;font-weight:400;color:#252423;transform:scaleX(1.0114);">New</div>
<div class="t" id="column" style="left:906.75px;top:166.56px;font-size:21.70px;font-weight:400;color:#252423;transform:scaleX(1.0457);">column</div>
<div class="t" id="new3" style="left:997.74px;top:137.77px;font-size:21.74px;font-weight:400;color:#252423;transform:scaleX(1.0114);">New</div>
<div class="t" id="table2" style="left:996.25px;top:166.56px;font-size:21.70px;font-weight:400;color:#252423;transform:scaleX(1.0220);">table</div>
<div class="t" id="calculations" style="left:839.07px;top:210.84px;font-size:19.60px;font-weight:400;color:#3B3A39;transform:scaleX(0.9251);">Calculations</div>
<div class="t" id="banner" style="left:135.90px;top:259.18px;font-size:22.61px;font-weight:400;color:#323130;transform:scaleX(0.9766);">There are pending changes in your queries that haven’t been applied.</div>
<div class="t" id="apply" style="left:1685.00px;top:258.67px;font-size:23.91px;font-weight:400;color:#252423;transform:scaleX(0.9371);">Apply changes</div>
<div class="t" id="discard" style="left:1910.33px;top:258.67px;font-size:23.91px;font-weight:400;color:#252423;transform:scaleX(0.9175);">Discard changes</div>
<div class="t" id="viz" style="left:2194.00px;top:267.86px;font-size:28.99px;font-weight:700;color:#323130;transform:scaleX(0.9463);-webkit-text-stroke:0.5px #F3F2F1;">Visualizations</div>
<div class="t" id="fields" style="left:2529.35px;top:267.86px;font-size:28.99px;font-weight:700;color:#323130;transform:scaleX(0.9038);-webkit-text-stroke:0.5px #F3F2F1;">Fields</div>
<div class="t" id="search" style="left:2567.53px;top:337.79px;font-size:27.54px;font-weight:400;color:#3B3A39;transform:scaleX(0.8695);">Search</div>
<div class="t" id="demobasic_f" style="left:2582.55px;top:416.91px;font-size:22.46px;font-weight:400;color:#252423;transform:scaleX(0.9457);">Demo Basic</div>
<div class="t" id="accounts" style="left:2640.70px;top:462.59px;font-size:21.30px;font-weight:400;color:#252423;transform:scaleX(1.0167);">Accounts</div>
<div class="t" id="period1" style="left:2639.72px;top:506.09px;font-size:21.30px;font-weight:400;color:#252423;transform:scaleX(0.9810);">Period.Peri...</div>
<div class="t" id="period2" style="left:2639.70px;top:550.89px;font-size:21.30px;font-weight:400;color:#252423;transform:scaleX(0.9959);">Period.Period.Lev...</div>
<div class="t" id="values" style="left:2193.70px;top:719.23px;font-size:22.32px;font-weight:400;color:#252423;transform:scaleX(0.9251);">Values</div>
<div class="t" id="adddata" style="left:2199.30px;top:770.29px;font-size:23.19px;font-weight:400;color:#252423;transform:scaleX(0.9570);">Add data fields here</div>
<div class="t" id="drill" style="left:2196.16px;top:836.27px;font-size:31.45px;font-weight:700;color:#323130;transform:scaleX(0.9186);-webkit-text-stroke:0.6px #F3F2F1;">Drill through</div>
<div class="t" id="cross" style="left:2186.76px;top:902.59px;font-size:21.30px;font-weight:400;color:#252423;transform:scaleX(1.0407);">Cross-report</div>
<div class="t" id="off" style="left:2203.52px;top:954.20px;font-size:23.77px;font-weight:400;color:#252423;transform:scaleX(0.9790);">Off</div>
<div class="t" id="keep" style="left:2186.77px;top:1021.59px;font-size:21.30px;font-weight:400;color:#252423;transform:scaleX(1.0309);">Keep all filters</div>
<div class="t" id="on" style="left:2203.54px;top:1073.29px;font-size:23.19px;font-weight:400;color:#252423;transform:scaleX(0.9647);">On</div>
<div class="t" id="adddrill" style="left:2195.50px;top:1138.29px;font-size:23.19px;font-weight:400;color:#252423;transform:scaleX(0.9831);">Add drill-through fields here</div>
<div class="t" id="filters" style="left:2154.56px;top:399.05px;font-size:30.40px;font-weight:700;color:#252423;transform:rotate(90deg) scaleX(0.8743);-webkit-text-stroke:0.5px #fff;">Filters</div>
<div class="t" id="build" style="left:851.18px;top:638.03px;font-size:40.43px;font-weight:700;color:#252423;transform:scaleX(0.8609);-webkit-text-stroke:0.6px #fff;">Build visuals with your data</div>
<div class="t" id="select" style="left:632.00px;top:707.97px;font-size:31.45px;font-weight:400;color:#252423;">Select or drag fields from the Fields pane onto the report canvas.</div>
<div class="t" id="page1" style="left:179.10px;top:1554.41px;font-size:22.46px;font-weight:400;color:#252423;transform:scaleX(0.9042);">Page 1</div>
<!-- dialog -->
<div class="a" style="left:952px;top:614px;width:929px;height:350px;background:#fff;border:1px solid #C8C6C4;box-shadow:2px 2px 3px rgba(0,0,0,0.25)"></div>
<div class="a" style="left:1713px;top:874px;width:111px;height:41px;border:2px solid #8A8886"></div>
<svg style="left:0;top:0" width="2830" height="1606">
 <path d="M1840.5,630 L1859.5,649 M1859.5,630 L1840.5,649" stroke="#605E5C" stroke-width="2" fill="none"/>
</svg>
<div class="t" id="load" style="left:1008.20px;top:652.37px;font-size:47.68px;font-weight:400;color:#3B3A39;transform:scaleX(0.8653);-webkit-text-stroke:1.2px #fff;">Load</div>
<div class="t" id="dl_demo" style="left:1044.94px;top:751.75px;font-size:25.00px;font-weight:400;color:#605E5C;transform:scaleX(0.8808);-webkit-text-stroke:0.7px #fff;">Demo Basic</div>
<div class="t" id="dl_eval" style="left:1044.86px;top:788.15px;font-size:25.00px;font-weight:400;color:#57544F;transform:scaleX(0.9189);-webkit-text-stroke:0.35px #fff;">Evaluating...</div>
<div class="t" id="cancel" style="left:1739.52px;top:885.08px;font-size:20.72px;font-weight:400;color:#252423;transform:scaleX(0.8793);">Cancel</div>
<svg style="left:0;top:0" width="2830" height="1606"><g fill="#3B3A39"><circle cx="1019.2" cy="753.7" r="1.9"/><circle cx="1013.5" cy="759.2" r="1.9"/><circle cx="1013.5" cy="766.5" r="1.9"/><circle cx="1019.2" cy="772.2" r="1.9"/></g></svg>
</body></html>
